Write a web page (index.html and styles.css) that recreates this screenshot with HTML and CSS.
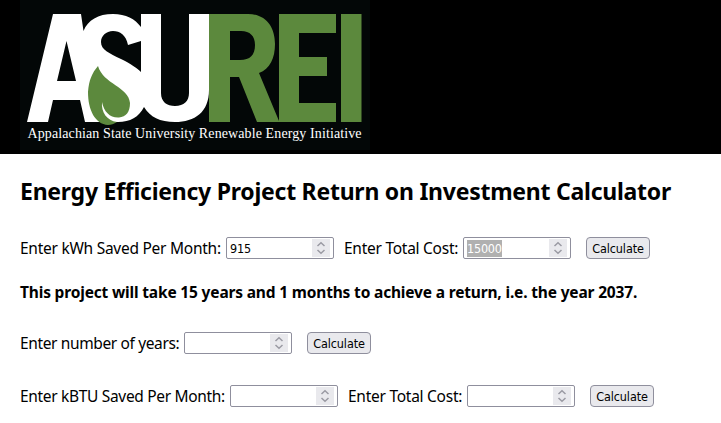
FILE: index.html
```html
<!DOCTYPE html>
<html lang="en">
<head>
<meta charset="utf-8">
<title>Energy Efficiency Project Return on Investment Calculator</title>
<link rel="stylesheet" href="styles.css">
</head>
<body>
<header class="banner">
<svg class="logo" viewBox="20 0 350 150">
<rect x="20" width="350" height="150" fill="#030707"/>
<path fill="#fff" fill-rule="evenodd" d="M53 14H81L83.500 31C88 20 98 14 113 14C126 14 135 19 141 27V14H161V93C161 102 167 106 175 106C184 106 189 101 189 93V14H209V90C209 112 195 122 175 122C160 122 150 117 144 107C139 117 130 122 118 122H85L80 100H53L48 122H27ZM66.500 41L57 81H76ZM141 41L128 45C126 35 120 31 113 31C106 31 101 36 101 42C101 50 109 53 121 59C131 64 137 68 141 72Z"/>
<path fill="#5c893d" fill-rule="evenodd" d="M209 14H248C266 14 275 27 275 44C275 58 270 69 259 73L279 121V14H336V33H299V57H327V76H299V103H336V122H257L239 77H230V122H209ZM230 31V60H240C250 60 255 55 255 45C255 36 250 31 241 31ZM341 14H361.500V122H341Z"/>
<path fill="#5c893d" d="M98 66C103 84 129 87 130 103C130 112 126 117 119 117.500C110 118 104 112 102 102C101 112 107 121 117 122C114 124 111 125 108 125C95 124 88 110 88 92C89 80 92 73 98 66Z"/>
<text class="caption" x="27.500" y="138" textLength="334">Appalachian State University Renewable Energy Initiative</text>
</svg>
</header>
<main>
<h1>Energy Efficiency Project Return on Investment Calculator</h1>
<div class="row">
<label class="kwh">Enter kWh Saved Per Month:</label>
<div class="field"><span>915</span><svg class="spin" viewBox="0 0 18 18"><path d="M5.500 7L9 3.800L12.500 7M5.500 11L9 14.200L12.500 11"/></svg></div>
<label class="cost">Enter Total Cost:</label>
<div class="field"><span class="selected">15000</span><svg class="spin" viewBox="0 0 18 18"><path d="M5.500 7L9 3.800L12.500 7M5.500 11L9 14.200L12.500 11"/></svg></div>
<button>Calculate</button>
</div>
<p class="result">This project will take 15 years and 1 months to achieve a return, i.e. the year 2037.</p>
<div class="row years-row">
<label class="years">Enter number of years:</label>
<div class="field"><svg class="spin" viewBox="0 0 18 18"><path d="M5.500 7L9 3.800L12.500 7M5.500 11L9 14.200L12.500 11"/></svg></div>
<button>Calculate</button>
</div>
<div class="row kbtu-row">
<label class="kbtu">Enter kBTU Saved Per Month:</label>
<div class="field"><svg class="spin" viewBox="0 0 18 18"><path d="M5.500 7L9 3.800L12.500 7M5.500 11L9 14.200L12.500 11"/></svg></div>
<label class="cost">Enter Total Cost:</label>
<div class="field"><svg class="spin" viewBox="0 0 18 18"><path d="M5.500 7L9 3.800L12.500 7M5.500 11L9 14.200L12.500 11"/></svg></div>
<button>Calculate</button>
</div>
</main>
</body>
</html>
```
FILE: styles.css
```css
* { box-sizing: border-box; }
body { margin: 0; background: #fff; color: #000; font: 15.5px/22px "Noto Sans", sans-serif; }
.banner { height: 154px; padding-left: 20px; background: #000; }
.logo { display: block; width: 350px; height: 150px; }
.caption { font: 14px "Liberation Serif", serif; fill: #fff; }
main { padding: 21px 20px 0; }
h1 { margin: 0; font-size: 23px; line-height: 32px; white-space: nowrap; letter-spacing: -0.25px; }
.row { display: flex; height: 22px; margin-top: 30px; }
label { white-space: nowrap; letter-spacing: -0.26px; }
.kwh { width: 206px; }
.cost { width: 119px; margin-left: 10px; }
.years { width: 164px; letter-spacing: -0.37px; }
.kbtu { width: 210px; letter-spacing: -0.32px; }
.field { display: flex; align-items: center; justify-content: space-between; flex: none; width: 108px; height: 22px; padding: 1px 3px; border: 1px solid #8f8f9d; border-radius: 2px; font: 12.5px/16px "DejaVu Sans Condensed", "DejaVu Sans", sans-serif; letter-spacing: -0.2px; }
.field span { padding-top: 1px; }
.selected { background: #b0b0b0; color: #fff; }
.spin { width: 18px; height: 18px; margin-left: auto; background: #e9e9ed; fill: none; stroke: #9a9aa3; stroke-width: 1.5; }
button { flex: none; width: 64px; height: 22px; margin-left: 15px; padding: 1px 0 0; border: 1px solid #8f8f9d; border-radius: 4px; background: #e9e9ed; color: #000; font: 12.5px/18px "DejaVu Sans Condensed", "DejaVu Sans", sans-serif; letter-spacing: -0.1px; }
.result { margin: 22px 0 0; font-size: 15.5px; font-weight: 700; white-space: nowrap; letter-spacing: -0.17px; }
.years-row { margin-top: 29px; }
.kbtu-row { margin-top: 31px; }
```
